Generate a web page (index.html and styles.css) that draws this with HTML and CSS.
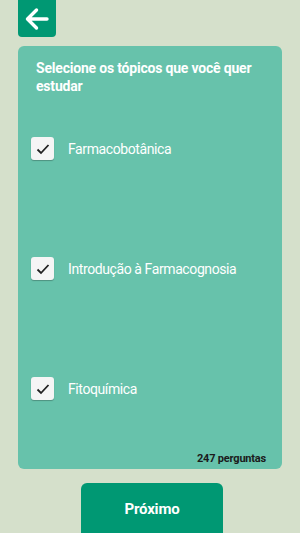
FILE: index.html
```html
<html>
  <head>
    <title>Tópicos</title>
    <meta name="viewport" content="width=device-width, initial-scale=1.0" />
    <link rel="stylesheet" href="styles.css">
  </head>
  <body>
    <div class="topo">
      <a class="voltar" href="#">
        <svg width="26" height="26" viewBox="0 0 26 26">
          <path d="M23 13H4.5M12.5 4L3.5 13L12.5 22" fill="none" stroke="white" stroke-width="3.4" stroke-linecap="round" stroke-linejoin="round"/>
        </svg>
      </a>
    </div>

    <div class="cartao">
      <h3>Selecione os tópicos que você quer estudar</h3>
      <div class="lista">
        <label class="topico">
          <span class="caixa"><svg width="16" height="16" viewBox="0 0 16 16"><path d="M2.5 8.5L6 12L13.5 4" fill="none" stroke="#222" stroke-width="1.8"/></svg></span>
          Farmacobotânica
        </label>
        <label class="topico">
          <span class="caixa"><svg width="16" height="16" viewBox="0 0 16 16"><path d="M2.5 8.5L6 12L13.5 4" fill="none" stroke="#222" stroke-width="1.8"/></svg></span>
          Introdução à Farmacognosia
        </label>
        <label class="topico">
          <span class="caixa"><svg width="16" height="16" viewBox="0 0 16 16"><path d="M2.5 8.5L6 12L13.5 4" fill="none" stroke="#222" stroke-width="1.8"/></svg></span>
          Fitoquímica
        </label>
      </div>
      <div class="total">247 perguntas</div>
    </div>

    <div class="rodape">
      <button class="proximo">Próximo</button>
    </div>
  </body>
</html>
```
FILE: styles.css
```css
body {
  margin: 0;
  background-color: #d5e0cb;
  font-family: Roboto, "Liberation Sans", sans-serif;
  height: 533px;
  overflow: hidden;
}
.topo {
  padding-left: 18px;
  height: 46px;
}
.voltar {
  display: flex;
  align-items: center;
  justify-content: center;
  width: 38px;
  height: 37px;
  background-color: #009873;
  border-radius: 0 0 4px 4px;
}
.cartao {
  margin: 0 18px;
  height: 423px;
  background-color: #67c2ab;
  border-radius: 6px;
  display: flex;
  flex-direction: column;
}
.cartao h3 {
  margin: 0;
  padding: 13px 18px 0 18px;
  color: white;
  font-size: 14px;
  font-weight: bold;
  line-height: 18px;
  letter-spacing: -0.2px;
}
.lista {
  display: flex;
  flex-direction: column;
  gap: 97px;
  padding: 42px 0 0 13px;
  flex: 1;
}
.topico {
  display: flex;
  align-items: center;
  gap: 14px;
  color: white;
  font-size: 14px;
  letter-spacing: -0.4px;
}
.caixa {
  display: flex;
  align-items: center;
  justify-content: center;
  width: 23px;
  height: 23px;
  background-color: #f5f5f5;
  border-radius: 3px;
  box-shadow: 0 1px 1px rgba(0, 0, 0, 0.25);
}
.total {
  text-align: right;
  padding: 0 16px 4px 0;
  font-size: 11px;
  font-weight: bold;
  color: #1b1b1b;
  letter-spacing: -0.2px;
}
.rodape {
  display: flex;
  justify-content: center;
  padding: 14px 0 0 4px;
}
.proximo {
  width: 142px;
  height: 60px;
  background-color: #009873;
  border: none;
  border-radius: 6px;
  color: white;
  font-family: Roboto, "Liberation Sans", sans-serif;
  font-size: 15px;
  font-weight: bold;
  letter-spacing: -0.2px;
  padding-bottom: 10px;
}
```
